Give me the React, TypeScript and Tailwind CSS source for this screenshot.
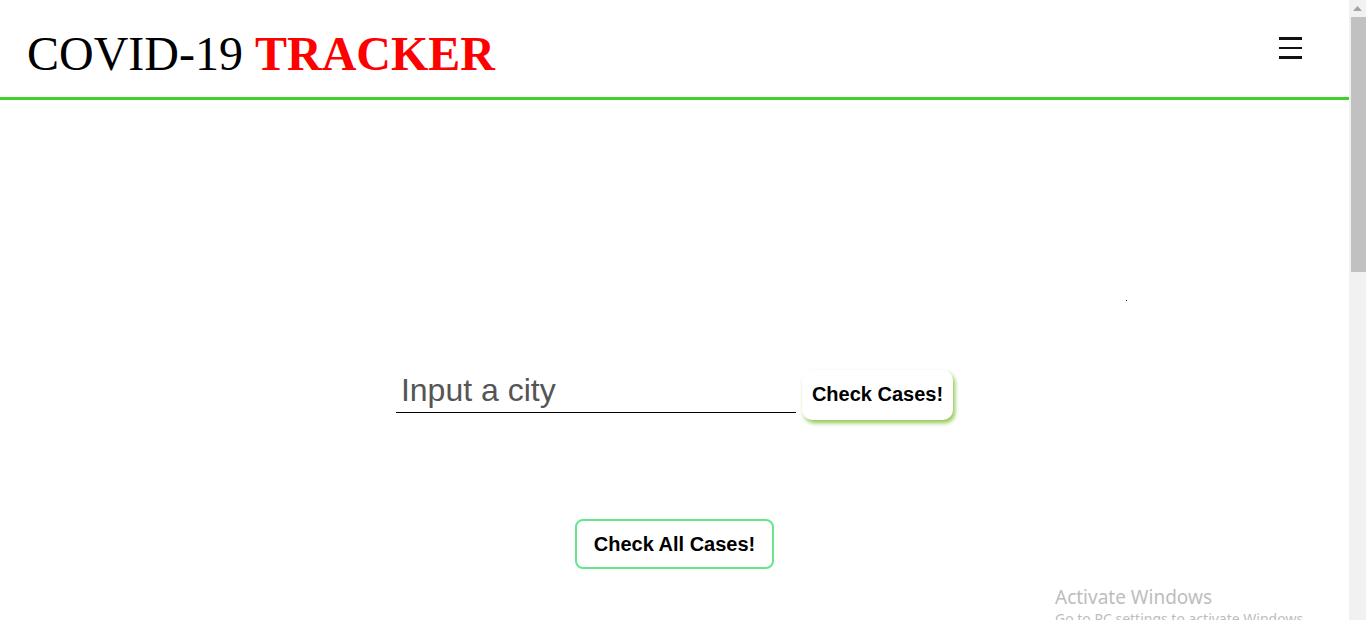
import React, { useState } from 'react';

const Header: React.FC = () => {
    return (
        <header className="h-[100px] border-b-[3px] border-[#3fd22b] flex justify-between items-start">
            <h1 className="pl-[27px] pt-[27px] text-[48px] leading-[53px] font-['Liberation_Serif',serif] text-black whitespace-nowrap">
                COVID-19 <span className="font-bold text-[#ff0000]">TRACKER</span>
            </h1>
            <button aria-label="menu" className="mt-[37px] mr-[47px] w-[23px] flex flex-col gap-[7px]">
                <span className="block h-[2.5px] w-full bg-[#111]" />
                <span className="block h-[2.5px] w-full bg-[#111]" />
                <span className="block h-[2.5px] w-full bg-[#111]" />
            </button>
        </header>
    );
};

const Scrollbar: React.FC = () => {
    return (
        <div className="w-[17px] h-full bg-[#f1f1f1] flex flex-col shrink-0">
            <div className="h-[17px] flex items-center justify-center">
                <svg width="9" height="5" viewBox="0 0 9 5">
                    <polygon points="0,5 9,5 4.5,0" fill="#a3a3a3" />
                </svg>
            </div>
            <div className="h-[255px] ml-[2px] bg-[#c1c1c1]" />
        </div>
    );
};

export default function App() {
    const [city, setCity] = useState('');

    return (
        <div className="relative h-[620px] w-full overflow-hidden bg-white flex font-['Liberation_Sans',Arial,sans-serif]">
            <div className="flex-1 flex flex-col">
                <Header />

                <main className="flex flex-col items-center">
                    <div className="mt-[270px] flex items-baseline">
                        <input
                            type="text"
                            value={city}
                            onChange={(e) => setCity(e.target.value)}
                            placeholder="Input a city"
                            className="w-[400px] px-[5px] pt-[1px] pb-[3px] text-[32px] leading-[37px] text-[#333] placeholder:text-[#555] border-b border-black outline-none bg-transparent"
                        />
                        <button className="ml-[6px] h-[50px] px-[10px] pb-[2px] rounded-[10px] bg-white text-[20px] font-bold text-black shadow-[2px_3px_4px_#8fc753]">
                            Check Cases!
                        </button>
                    </div>

                    <button className="mt-[99px] w-[199px] h-[50px] rounded-[8px] border-2 border-[#66e68c] bg-white text-[20px] font-bold text-black">
                        Check All Cases!
                    </button>
                </main>
            </div>

            <Scrollbar />

            {/* stray pixel in the reference */}
            <span className="absolute left-[1126px] top-[300px] w-px h-px bg-[#222]" />

            {/* windows watermark */}
            <div className="absolute left-[1055px] top-[584px] font-['Noto_Sans',sans-serif] text-[#bdbdbd] pointer-events-none">
                <div className="text-[19px] leading-[26px]">Activate Windows</div>
                <div className="text-[14px] leading-[18px] whitespace-nowrap">Go to PC settings to activate Windows.</div>
            </div>
        </div>
    );
}
